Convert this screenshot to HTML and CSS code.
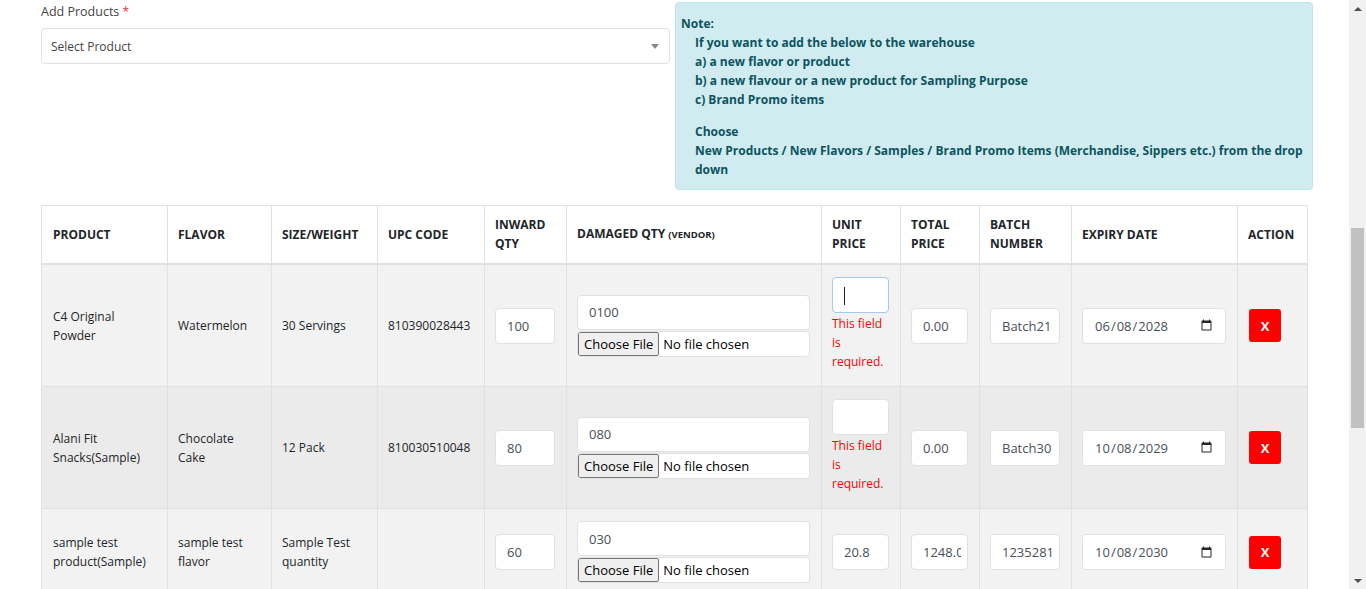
FILE: index.html
```html
<!DOCTYPE html>
<html lang="en">
<head>
<meta charset="utf-8">
<title>Add Products</title>
<link rel="stylesheet" href="styles.css">
</head>
<body>
<div class="page">
  <div class="main">
    <div class="top">
      <div class="left">
        <label class="field-label">Add Products <span class="req">*</span></label>
        <div class="select">
          <span class="select-text">Select Product</span>
          <span class="select-arrow"></span>
        </div>
      </div>
      <div class="note">
        <div class="line">Note:</div>
        <div class="indent">
          <div class="line">If you want to add the below to the warehouse</div>
          <div class="line">a) a new flavor or product</div>
          <div class="line">b) a new flavour or a new product for Sampling Purpose</div>
          <div class="line">c) Brand Promo items</div>
          <div class="line choose">Choose</div>
          <div class="line">New Products / New Flavors / Samples / Brand Promo Items (Merchandise, Sippers etc.) from the drop down</div>
        </div>
      </div>
    </div>

    <table class="grid">
      <colgroup>
        <col class="c-product"><col class="c-flavor"><col class="c-size"><col class="c-upc"><col class="c-inward"><col class="c-damaged"><col class="c-unit"><col class="c-total"><col class="c-batch"><col class="c-expiry"><col class="c-action">
      </colgroup>
      <thead>
        <tr>
          <th>PRODUCT</th>
          <th>FLAVOR</th>
          <th>SIZE/WEIGHT</th>
          <th>UPC CODE</th>
          <th>INWARD QTY</th>
          <th>DAMAGED QTY <small>(VENDOR)</small></th>
          <th>UNIT PRICE</th>
          <th>TOTAL PRICE</th>
          <th>BATCH NUMBER</th>
          <th>EXPIRY DATE</th>
          <th>ACTION</th>
        </tr>
      </thead>
      <tbody>
        <tr class="odd">
          <td>C4 Original Powder</td>
          <td>Watermelon</td>
          <td>30 Servings</td>
          <td>810390028443</td>
          <td><input class="ctl" type="text" value="100"></td>
          <td>
            <input class="ctl dmg" type="text" value="0100">
            <input class="file" type="file">
          </td>
          <td>
            <input class="ctl focused" type="text" value="">
            <div class="err">This field is required.</div>
          </td>
          <td><input class="ctl" type="text" value="0.00"></td>
          <td><input class="ctl" type="text" value="Batch21"></td>
          <td><input class="ctl date" type="date" value="2028-06-08"></td>
          <td><button class="del" type="button">X</button></td>
        </tr>
        <tr class="hover">
          <td>Alani Fit Snacks(Sample)</td>
          <td>Chocolate Cake</td>
          <td>12 Pack</td>
          <td>810030510048</td>
          <td><input class="ctl" type="text" value="80"></td>
          <td>
            <input class="ctl dmg" type="text" value="080">
            <input class="file" type="file">
          </td>
          <td>
            <input class="ctl" type="text" value="">
            <div class="err">This field is required.</div>
          </td>
          <td><input class="ctl" type="text" value="0.00"></td>
          <td><input class="ctl" type="text" value="Batch30"></td>
          <td><input class="ctl date" type="date" value="2029-10-08"></td>
          <td><button class="del" type="button">X</button></td>
        </tr>
        <tr class="odd">
          <td>sample test product(Sample)</td>
          <td>sample test flavor</td>
          <td>Sample Test quantity</td>
          <td></td>
          <td><input class="ctl" type="text" value="60"></td>
          <td>
            <input class="ctl dmg" type="text" value="030">
            <input class="file" type="file">
          </td>
          <td><input class="ctl" type="text" value="20.8"></td>
          <td><input class="ctl" type="text" value="1248.00"></td>
          <td><input class="ctl" type="text" value="12352818"></td>
          <td><input class="ctl date" type="date" value="2030-10-08"></td>
          <td><button class="del" type="button">X</button></td>
        </tr>
      </tbody>
    </table>
  </div>
  <div class="scrollbar">
    <div class="sb-arrow up"></div>
    <div class="sb-track"><div class="sb-thumb"></div></div>
    <div class="sb-arrow down"></div>
  </div>
</div>
</body>
</html>
```

FILE: styles.css
```css
* { box-sizing: border-box; }
html, body { margin: 0; padding: 0; background: #fff; }
body {
  font-family: "Open Sans", "Liberation Sans", sans-serif;
  font-size: 12px;
  color: #212529;
}
.page {
  display: flex;
  height: 589px;
  overflow: hidden;
}
.main {
  flex: 1;
  min-width: 0;
  padding: 2px 0 0 41px;
}
.top {
  display: flex;
  gap: 5px;
  align-items: flex-start;
}
.left { width: 629px; }
.field-label {
  display: block;
  font-size: 12.5px;
  line-height: 19px;
  color: #444;
  margin-bottom: 7px;
}
.req { color: #e3342f; font-size: 12px; }
.select {
  height: 36px;
  border: 1px solid #dee2e6;
  border-radius: 4px;
  display: flex;
  align-items: center;
  justify-content: space-between;
  padding: 0 10px 0 9px;
  background: #fff;
}
.select-text { font-size: 12px; color: #444; }
.select-arrow {
  width: 0; height: 0;
  border-left: 4px solid transparent;
  border-right: 4px solid transparent;
  border-top: 5px solid #888;
}
.note {
  width: 638px;
  background: #d1ecf1;
  border: 1px solid #bee5eb;
  border-radius: 4px;
  color: #0c5460;
  font-weight: 700;
  font-size: 12px;
  line-height: 19px;
  padding: 11px 8px 10px 5px;
}
.indent { padding-left: 14px; }
.choose { margin-top: 13px; }

.grid {
  margin-top: 15px;
  width: 1266px;
  table-layout: fixed;
  border-collapse: collapse;
}
.c-product { width: 126px; }
.c-flavor { width: 104px; }
.c-size { width: 106px; }
.c-upc { width: 107px; }
.c-inward { width: 82px; }
.c-damaged { width: 255px; }
.c-unit { width: 79px; }
.c-total { width: 79px; }
.c-batch { width: 92px; }
.c-expiry { width: 166px; }
.c-action { width: 70px; }

.grid th, .grid td {
  border: 1px solid #dee2e6;
  vertical-align: middle;
  text-align: left;
  padding: 12px 11px 12px 10px;
  line-height: 19px;
}
.grid th:first-child, .grid td:first-child { padding-left: 11px; }
.grid th {
  font-weight: 700;
  font-size: 12px;
  color: #212529;
  padding-top: 9px;
  padding-bottom: 10px;
  border-bottom: 2px solid #dee2e6;
  background: #fff;
}
.grid th small { font-size: 9.5px; font-weight: 700; }
.grid td { font-size: 12px; }
tr.odd td { background: #f2f2f2; }
tr.hover td { background: #ebebeb; }

.ctl {
  display: block;
  width: 100%;
  height: 36px;
  border: 1px solid #dee2e6;
  border-radius: 4px;
  background: #fff;
  padding: 0 6px 0 11px;
  font-family: "Open Sans", "Liberation Sans", sans-serif;
  font-size: 13px;
  color: #495057;
  outline: none;
}
.ctl.dmg { height: 35px; margin-bottom: 1px; }
.ctl.focused {
  border-color: #a8c8f0;
  background: #fff linear-gradient(#222, #222) no-repeat 11px 9px / 1px 18px;
}
.ctl.date { padding: 0 10px 0 11px; }
.ctl.date::-webkit-calendar-picker-indicator { margin-left: 0; opacity: 0.85; }
.file {
  display: block;
  width: 100%;
  height: 26px;
  border: 1px solid #dee2e6;
  border-radius: 4px;
  background: #fff;
  padding: 0;
  font-family: "Open Sans", "Liberation Sans", sans-serif;
  font-size: 13px;
  color: #000;
}
.file::file-selector-button {
  height: 24px;
  margin: 0 4px 0 0;
  padding: 0 5px;
  border: 1px solid #767676;
  border-radius: 2px;
  background: #efefef;
  color: #000;
  font-family: "Open Sans", "Liberation Sans", sans-serif;
  font-size: 13px;
}
.err {
  color: #ff0000;
  font-size: 12px;
  line-height: 19px;
  margin-top: 1px;
  margin-bottom: 3px;
}
.del {
  width: 32px;
  height: 33px;
  border: none;
  border-radius: 3px;
  background: #ff0000;
  color: #fff;
  font-family: "Open Sans", "Liberation Sans", sans-serif;
  font-weight: 700;
  font-size: 13px;
  padding: 0;
  margin-left: 1px;
}

.scrollbar {
  width: 17px;
  flex: 0 0 17px;
  background: #f1f1f1;
  display: flex;
  flex-direction: column;
}
.sb-arrow {
  height: 17px;
  display: flex;
  align-items: center;
  justify-content: center;
}
.sb-arrow::before {
  content: "";
  width: 0; height: 0;
  border-left: 4px solid transparent;
  border-right: 4px solid transparent;
}
.sb-arrow.up::before { border-bottom: 4px solid #505050; }
.sb-arrow.down::before { border-top: 4px solid #505050; }
.sb-track { flex: 1; padding: 0 2px; }
.sb-thumb {
  margin-top: 211px;
  height: 200px;
  background: #c1c1c1;
}
```
